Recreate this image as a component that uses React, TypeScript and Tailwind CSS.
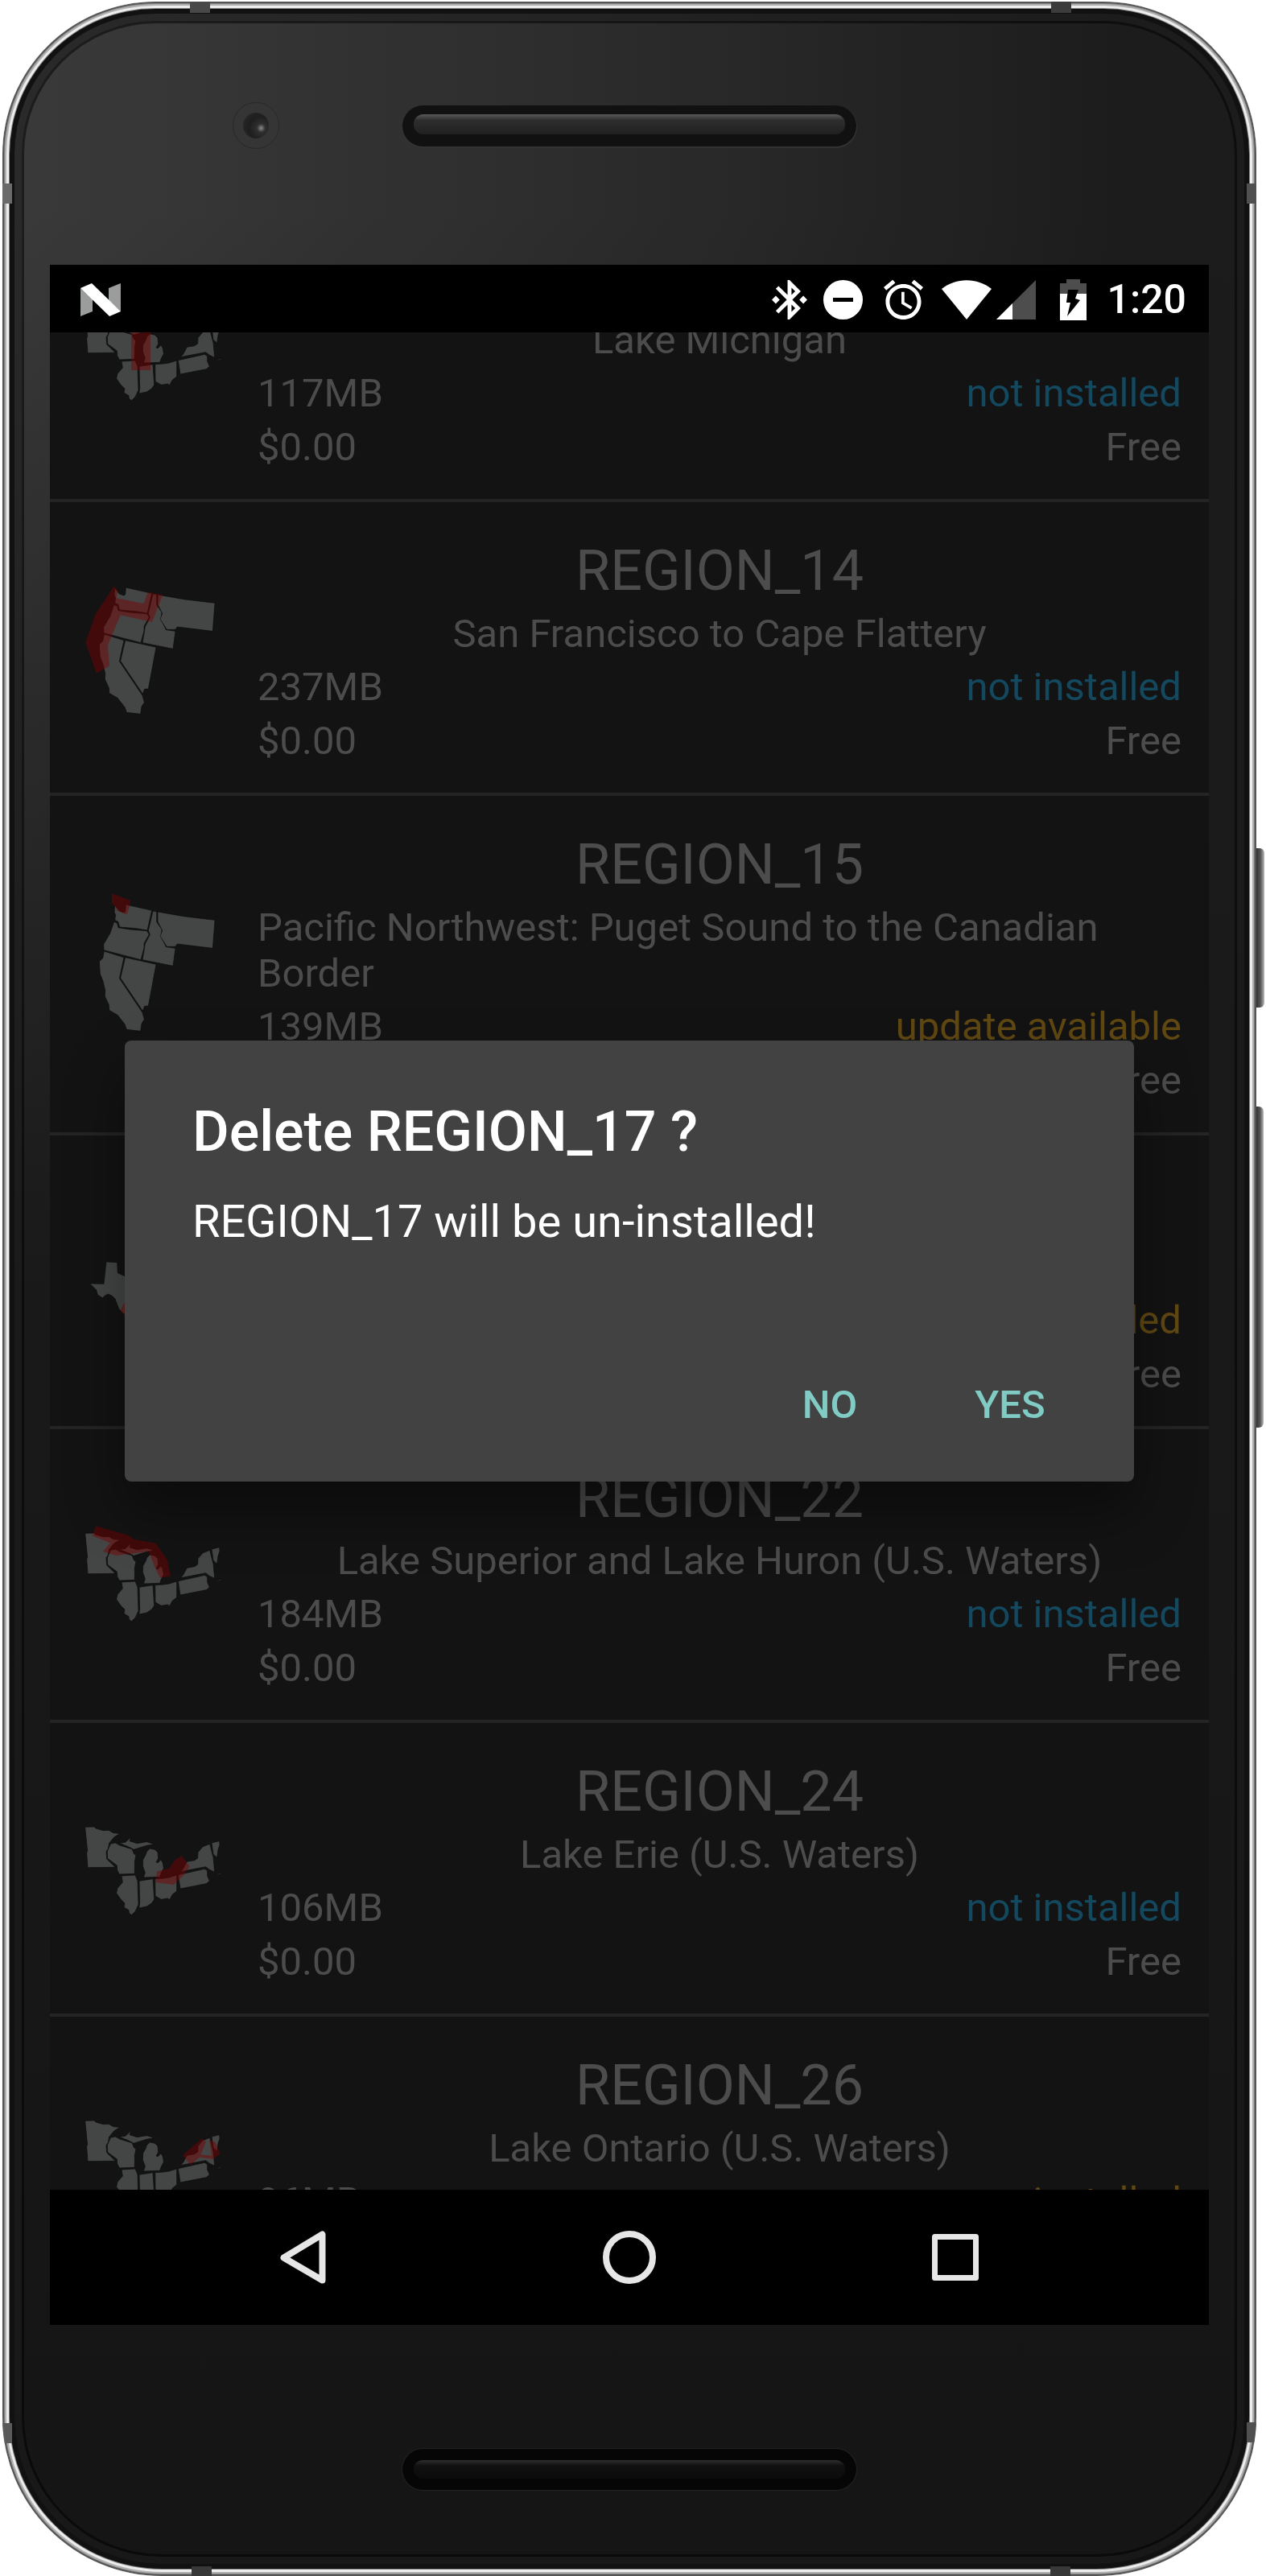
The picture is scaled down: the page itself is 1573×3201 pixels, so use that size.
import React, { useLayoutEffect, useRef } from "react";

type MapKind = "lakes" | "west" | "texas";

interface Region {
  name: string;
  description: string;
  size: string;
  status: "not installed" | "installed" | "update available";
  map: MapKind;
  highlight: string;
}

const regions: Region[] = [
  {
    name: "REGION_13",
    description: "Lake Michigan",
    size: "117MB",
    status: "not installed",
    map: "lakes",
    highlight: "M204 62H276V276H204Z",
  },
  {
    name: "REGION_14",
    description: "San Francisco to Cape Flattery",
    size: "237MB",
    status: "not installed",
    map: "west",
    highlight:
      "M140 35L155 54L148 79L250 100L267 57L322 67L282 169L164 143L117 255L123 333L74 360L34 245L71 139Z",
  },
  {
    name: "REGION_15",
    description: "Pacific Northwest: Puget Sound to the Canadian Border",
    size: "139MB",
    status: "update available",
    map: "west",
    highlight: "M132 -2L201 25L198 45L188 78L150 62L148 50L132 36Z",
  },
  {
    name: "REGION_17",
    description: "\u00a0",
    size: "\u00a0",
    status: "installed",
    map: "texas",
    highlight: "M180 358L200 350L230 400L185 410L163 388Z",
  },
  {
    name: "REGION_22",
    description: "Lake Superior and Lake Huron (U.S. Waters)",
    size: "184MB",
    status: "not installed",
    map: "lakes",
    highlight:
      "M73 34L193 68L213 83L296 98L339 161L351 222L311 226L290 183L270 129L148 144L99 129L125 97L59 70Z",
  },
  {
    name: "REGION_24",
    description: "Lake Erie (U.S. Waters)",
    size: "106MB",
    status: "not installed",
    map: "lakes",
    highlight: "M300 226L345 216L365 185L392 168L422 208L400 240L362 276L295 268Z",
  },
  {
    name: "REGION_26",
    description: "Lake Ontario (U.S. Waters)",
    size: "96MB",
    status: "installed",
    map: "lakes",
    highlight:
      "M468 127L483 139L464 187L504 191L495 133L518 142L536 182L510 204L458 197L425 225L396 189Z",
  },
];

const mapShapes: Record<MapKind, { viewBox: string; states: string[] }> = {
  lakes: {
    viewBox: "0 -63 555 555",
    states: [
      "M32 61L66 60L72 66L100 74L120 73L138 83L162 85L140 99L122 121L118 142L111 152L113 180L145 211L42 212L38 156L41 150Z",
      "M127 124L145 120L161 129L186 137L207 143L215 162L222 165L217 190L217 235L160 237L152 222L151 204L116 178L115 152Z",
      "M160 121L182 118L204 98L198 113L226 122L262 116L281 122L286 126L262 130L226 141L214 145L193 134Z",
      "M262 152L274 141L292 145L303 155L305 178L297 192L304 194L315 182L322 195L325 215L316 232L311 247L250 249L256 231L247 206L248 182L258 165Z",
      "M168 243L219 240L228 262L231 350L219 376L205 389L196 382L195 371L177 360L180 345L165 330L149 307L153 289L172 267Z",
      "M234 262L285 254L290 331L280 345L262 357L233 363L236 345Z",
      "M293 254L325 252L345 249L374 240L374 300L358 312L347 332L340 327L316 331L294 318Z",
      "M379 239L478 217L488 224L488 243L496 262L484 272L387 291Z",
      "M398 216L412 190L440 185L452 177L453 155L471 134L497 124L504 152L510 174L515 229L496 220L482 209L388 227Z",
      "M504 120L533 113L534 128L528 145L524 175L510 162Z",
      "M524 237L540 231L538 236L526 239Z",
    ],
  },
  west: {
    viewBox: "0 -14 555 555",
    states: [
      "M143 42L160 64L176 70L182 66L184 40L281 62L264 136L222 129L161 124L155 104L143 98L146 78L141 70Z",
      "M140 104L152 110L156 126L200 133L262 138L271 151L252 185L252 202L240 246L102 210L101 188L125 148Z",
      "M285 64L299 67L299 105L318 132L316 160L334 198L369 203L360 269L246 246L253 206L256 186L274 152L268 137Z",
      "M303 67L400 84L516 98L508 203L376 187L368 197L337 197L312 158L320 137L303 104Z",
      "M103 214L177 237L160 315L246 443L253 468L243 484L239 512L187 506L180 486L153 452L122 434L121 414L106 382L107 360L99 326L88 298L85 252L98 240Z",
      "M182 237L297 263L268 418L254 419L247 437L164 314Z",
    ],
  },
  texas: {
    viewBox: "0 0 555 555",
    states: [
      "M111 207L152 209L154 248L180 260L222 266L252 274L262 300L260 340L210 370L190 406L174 400L158 382L144 345L132 333L117 327L105 334L97 342L79 330L74 312L50 288L102 289Z",
    ],
  },
};

function RegionMap({ kind, highlight }: { kind: MapKind; highlight: string }) {
  const shape = mapShapes[kind];
  return (
    <svg viewBox={shape.viewBox} className="size-[185px] shrink-0" aria-hidden="true">
      {shape.states.map((d) => (
        <path key={d} d={d} fill="#444645" stroke="#0b0b0b" strokeWidth="2" strokeLinejoin="round" />
      ))}
      <path d={highlight} fill="#7c0000" fillOpacity="0.45" />
    </svg>
  );
}

const statusColor: Record<Region["status"], string> = {
  "not installed": "text-[#14485e]",
  installed: "text-[#604812]",
  "update available": "text-[#604812]",
};

function RegionRow({ region }: { region: Region }) {
  return (
    <li className="flex items-center gap-10 border-b-4 border-[#242424] pl-[33px] pr-[34px]">
      <RegionMap kind={region.map} highlight={region.highlight} />
      <div className="flex flex-1 flex-col gap-[9px] pt-11 pb-[35px] text-[49px] leading-[58px]">
        <h2 className="text-center text-[70px] leading-[82px]">{region.name}</h2>
        <div className="flex justify-center">
          <p className="leading-[57px]">{region.description}</p>
        </div>
        <div className="flex justify-between">
          <span>{region.size}</span>
          <span className={statusColor[region.status]}>{region.status}</span>
        </div>
        <div className="flex justify-between">
          <span>$0.00</span>
          <span>Free</span>
        </div>
      </div>
    </li>
  );
}

function StatusBar() {
  return (
    <header className="flex h-[84px] shrink-0 items-center bg-black pt-0.5 pl-[38px] pr-7 text-white">
      <svg viewBox="0 0 50 41" className="h-[41px] w-[50px]" aria-label="Android N">
        <path d="M0 6L15 20V35L0 41Z" fill="#9b9d9c" />
        <path d="M35 6L50 0V35L35 21Z" fill="#9b9d9c" />
        <path d="M0 6L14 0L50 35L36 41Z" fill="#fff" />
      </svg>
      <div className="ml-auto flex items-center">
        <svg viewBox="3 2 18 20" className="h-[49px] w-11" fill="currentColor" aria-label="Bluetooth connected">
          <path d="M7 12l-2-2-2 2 2 2 2-2zm10.71-4.29L12 2h-1v7.59L6.41 5 5 6.41 10.59 12 5 17.59 6.41 19 11 14.41V22h1l5.71-5.71-4.3-4.29 4.3-4.29zM13 5.83l1.88 1.88L13 9.59V5.83zm1.88 10.46L13 18.17v-3.76l1.88 1.88zM19 10l-2 2 2 2 2-2-2-2z" />
        </svg>
        <svg viewBox="0 0 49 49" className="ml-5 size-[49px]" aria-label="Do not disturb">
          <circle cx="24.5" cy="24.5" r="24.5" fill="#fff" />
          <rect x="12" y="22" width="25" height="5" fill="#000" />
        </svg>
        <svg viewBox="2 2 20 20" className="ml-[26px] size-[49px]" fill="currentColor" aria-label="Alarm">
          <path d="M22 5.72l-4.6-3.86-1.29 1.53 4.6 3.86L22 5.72zM7.88 3.39L6.6 1.86 2 5.71l1.29 1.53 4.59-3.85zM12.5 8H11v6l4.75 2.85.75-1.23-4-2.37V8zM12 4c-4.97 0-9 4.03-9 9s4.02 9 9 9c4.97 0 9-4.03 9-9s-4.03-9-9-9zm0 16c-3.87 0-7-3.13-7-7s3.13-7 7-7 7 3.13 7 7-3.13 7-7 7z" />
        </svg>
        <svg viewBox="0 0 62 49" className="ml-[23px] h-[49px] w-[62px]" fill="currentColor" aria-label="Wi-Fi">
          <path d="M0 11C18-3.500 44-3.500 62 11L31 49Z" />
        </svg>
        <svg viewBox="0 0 49 49" className="ml-1.5 size-[49px]" aria-label="Cell signal">
          <path d="M49 0V49H0Z" fill="#4d4d4d" />
          <path d="M20 29V49H0Z" fill="#fff" />
        </svg>
        <svg viewBox="0 0 33 51" className="ml-[30px] h-[51px] w-[33px]" aria-label="Battery charging">
          <path d="M8 0H25V5H33V18H0V5H8Z" fill="#4d4d4d" />
          <path d="M0 18H33V51H0Z" fill="#fff" />
          <path d="M10 13H23L19 24L25 26L9 46L13 29H8Z" fill="#000" />
        </svg>
        <time className="ml-[26px] text-[50px] leading-[58px] font-medium">1:20</time>
      </div>
    </header>
  );
}

function NavBar() {
  return (
    <nav className="flex h-[168px] shrink-0 bg-black px-28 text-[#e6e6e6]">
      <button type="button" aria-label="Back" className="flex flex-1 items-center justify-center">
        <svg viewBox="0 0 57 66" className="h-[66px] w-[57px]" fill="none" stroke="currentColor" strokeWidth="8" strokeLinejoin="round">
          <path d="M4.500 33.500L52.500 4.500V61.500Z" />
        </svg>
      </button>
      <button type="button" aria-label="Home" className="flex flex-1 items-center justify-center">
        <svg viewBox="0 0 66 66" className="size-[66px]" fill="none" stroke="currentColor" strokeWidth="8">
          <circle cx="33" cy="33" r="29" />
        </svg>
      </button>
      <button type="button" aria-label="Recent apps" className="flex flex-1 items-center justify-center">
        <svg viewBox="0 0 58 58" className="size-[58px]" fill="none" stroke="currentColor" strokeWidth="7" strokeLinejoin="round">
          <rect x="3.500" y="3.500" width="51" height="51" />
        </svg>
      </button>
    </nav>
  );
}

function DeleteDialog() {
  return (
    <div className="absolute inset-0 flex items-center px-[93px]">
      <div
        role="dialog"
        aria-labelledby="dialog-title"
        className="flex-1 rounded-lg bg-[#424242] pt-[72px] pb-8 text-white shadow-[0_36px_70px_rgba(0,0,0,0.4)]"
      >
        <h1 id="dialog-title" className="px-[84px] text-[70px] leading-[82px] font-medium">
          Delete REGION_17 ?
        </h1>
        <p className="mt-[38px] px-[84px] text-[56px] leading-[66px]">REGION_17 will be un-installed!</p>
        <div className="mt-[132px] flex justify-end pr-[42px] text-[49px] font-medium text-[#80cbc4]">
          <button type="button" className="h-[126px] w-56">
            NO
          </button>
          <button type="button" className="h-[126px] w-56">
            YES
          </button>
        </div>
      </div>
    </div>
  );
}

function Speaker({ dark = false }: { dark?: boolean }) {
  return (
    <div
      className={
        dark
          ? "h-[51px] w-[564px] rounded-full bg-[#060606] px-3.5 pt-3.5 shadow-[0_0_0_1px_#222]"
          : "h-[51px] w-[564px] rounded-full bg-[#111] px-3.5 pt-[11px] shadow-[0_1px_0_1px_#333]"
      }
    >
      <div
        className={
          dark
            ? "h-[23px] rounded-xl bg-linear-to-b from-[#2e2e2e] via-[#111] via-30% to-[#0b0b0b]"
            : "h-[25px] rounded-xl bg-linear-to-b from-[#5a5a5a] via-[#2e2e2e] via-30% to-[#202020]"
        }
      />
    </div>
  );
}

function AntennaMarks() {
  return (
    <div aria-hidden="true">
      <i className="absolute top-0 left-[233px] h-3.5 w-[25px] bg-[#484848]" />
      <i className="absolute top-0 right-[230px] h-3.5 w-[25px] bg-[#3c3c3c]" />
      <i className="absolute bottom-0 left-[235px] h-3 w-[25px] bg-[#383838]" />
      <i className="absolute right-[231px] bottom-0 h-3 w-[25px] bg-[#383838]" />
      <i className="absolute top-[226px] left-0 h-[25px] w-3 bg-[#6a6a6a]" />
      <i className="absolute top-[226px] right-0 h-[25px] w-3 bg-[#505050]" />
      <i className="absolute bottom-[165px] left-0 h-[25px] w-3 bg-[#5a5a5a]" />
      <i className="absolute right-0 bottom-[166px] h-[25px] w-3 bg-[#505050]" />
    </div>
  );
}

export default function App() {
  const list = useRef<HTMLUListElement>(null);

  // The list opens scrolled part of the way into its first row.
  useLayoutEffect(() => {
    if (list.current) list.current.scrollTop = 154;
  }, []);

  return (
    <div className="flex h-screen overflow-hidden bg-white pt-0.5 pl-[3px] font-[Roboto,sans-serif]">
      <div className="relative flex min-w-0 flex-1 flex-col overflow-hidden rounded-t-[190px] rounded-b-[198px] bg-[linear-gradient(to_bottom,transparent_0%,transparent_8%,#191919_50%,#151515_100%),linear-gradient(to_right,#3a3a3a_0%,#2b2b2b_50%,#1c1c1c_90%)] px-[59px] shadow-[inset_0_0_0_2px_#555,inset_0_0_0_3px_#808080,inset_0_0_0_5px_#b0b0b0,inset_0_0_0_8px_#ededed,inset_0_0_0_9px_#808080,inset_0_0_0_15px_#111,inset_0_0_0_24px_rgba(255,255,255,0.06),inset_0_0_0_27px_rgba(0,0,0,0.5)]">
        <AntennaMarks />
        <div className="relative flex h-[327px] shrink-0 justify-center pt-[129px]">
          <Speaker />
          <div className="absolute top-[125px] left-[227px] flex size-[58px] items-center justify-center rounded-full border border-[#292929] bg-[#353535]">
            <div className="size-8 rounded-full bg-[radial-gradient(circle_at_70%_60%,#8a8a8a_0%,#2f2f2f_18%,#1e1e1e_50%,#2c2c2c_100%)]" />
          </div>
        </div>
        <div className="flex min-h-0 flex-1 flex-col">
          <StatusBar />
          <main className="relative min-h-0 flex-1 bg-[#131313] text-[#4c4c4c]">
            <ul ref={list} className="h-full overflow-hidden">
              {regions.map((region) => (
                <RegionRow key={region.name} region={region} />
              ))}
            </ul>
            <DeleteDialog />
          </main>
          <NavBar />
        </div>
        <div className="flex h-[312px] shrink-0 justify-center pt-[154px]">
          <Speaker dark />
        </div>
      </div>
      <div className="flex w-[12px] shrink-0 flex-col gap-[123px] pt-[1052px]" aria-hidden="true">
        <div className="h-[198px] w-2.5 rounded-r-md bg-linear-to-r from-[#333] via-[#555] to-[#bbb]" />
        <div className="h-[399px] w-[9px] rounded-r-md bg-linear-to-r from-[#333] via-[#555] to-[#bbb]" />
      </div>
    </div>
  );
}
